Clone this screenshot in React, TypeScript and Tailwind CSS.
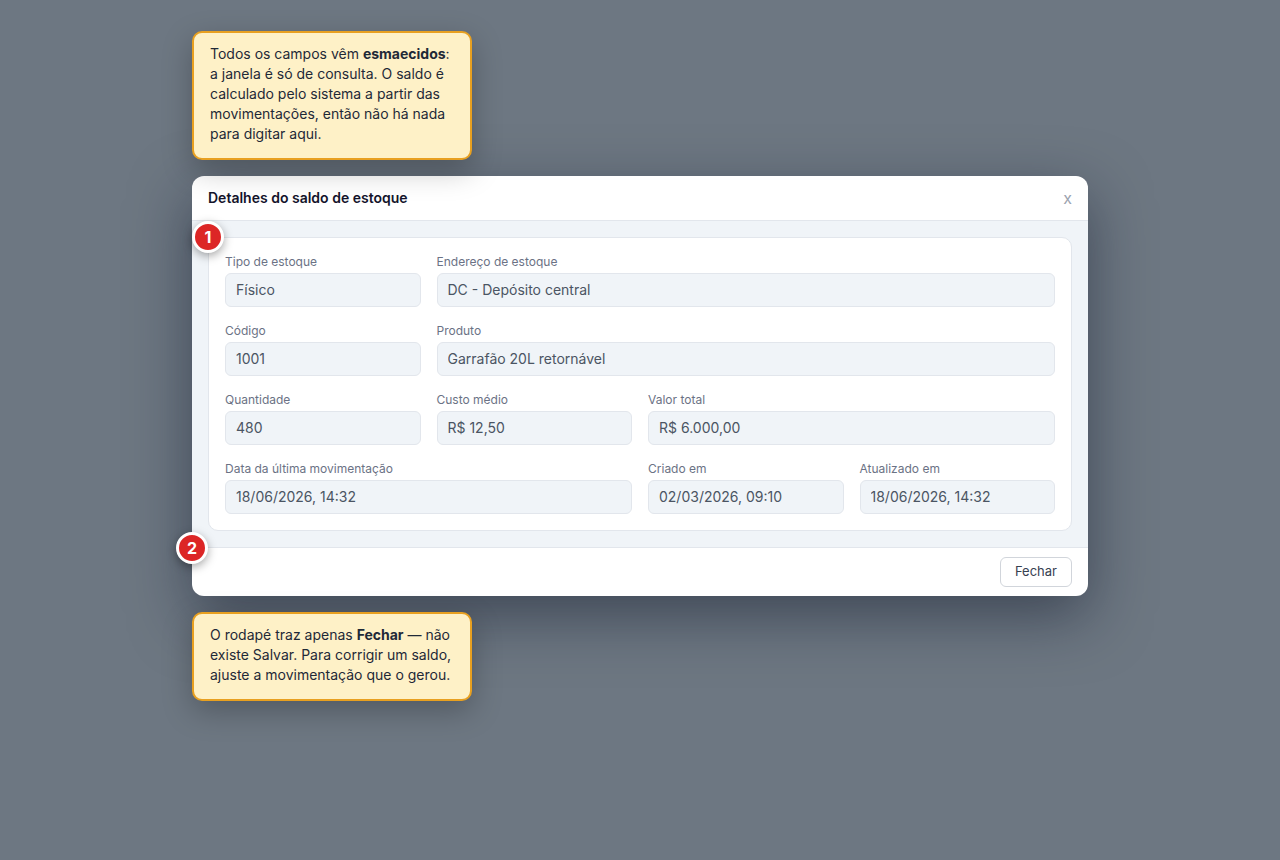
import type { ReactNode } from "react";

interface Field {
  id: string;
  label: string;
  value: string;
  span: string;
}

const fields: Field[] = [
  { id: "tipo", label: "Tipo de estoque", value: "Físico", span: "col-span-1" },
  { id: "endereco", label: "Endereço de estoque", value: "DC - Depósito central", span: "col-span-3" },
  { id: "codigo", label: "Código", value: "1001", span: "col-span-1" },
  { id: "produto", label: "Produto", value: "Garrafão 20L retornável", span: "col-span-3" },
  { id: "quantidade", label: "Quantidade", value: "480", span: "col-span-1" },
  { id: "custo", label: "Custo médio", value: "R$ 12,50", span: "col-span-1" },
  { id: "total", label: "Valor total", value: "R$ 6.000,00", span: "col-span-2" },
  { id: "ultima", label: "Data da última movimentação", value: "18/06/2026, 14:32", span: "col-span-2" },
  { id: "criado", label: "Criado em", value: "02/03/2026, 09:10", span: "col-span-1" },
  { id: "atualizado", label: "Atualizado em", value: "18/06/2026, 14:32", span: "col-span-1" },
];

function Note({ children }: { children: ReactNode }) {
  return (
    <aside className="relative z-10 w-[280px] rounded-[10px] border-2 border-[#e8a020] bg-[#fef1c7] px-4 pt-[11px] pb-3.5 text-sm leading-5 text-[#1f2937] shadow-[0_10px_30px_rgba(0,0,0,0.25)]">
      {children}
    </aside>
  );
}

function Badge({ n }: { n: number }) {
  return (
    <span className="absolute -top-4 -left-4 z-20 flex size-8 items-center justify-center rounded-full border-3 border-white bg-[#dc2626] text-base font-bold text-white shadow-[0_3px_10px_rgba(0,0,0,0.35)]">
      {n}
    </span>
  );
}

function ReadOnlyField({ id, label, value, span }: Field) {
  return (
    <div className={`flex min-w-0 flex-col gap-1 ${span}`}>
      <label htmlFor={id} className="text-xs leading-[15px] text-[#6b7285]">
        {label}
      </label>
      <input
        id={id}
        type="text"
        readOnly
        value={value}
        className="h-[34px] w-full rounded-md border border-[#e2e6ec] bg-[#f0f4f8] px-2.5 pb-0.5 text-sm text-[#4b5563]"
      />
    </div>
  );
}

export default function App() {
  return (
    <div className="min-h-screen bg-[#6d7782] px-4 pt-[31px] pb-8 font-['Inter',sans-serif]">
      <div className="mx-auto flex max-w-4xl flex-col gap-4">
        <Note>
          Todos os campos vêm <strong className="font-bold">esmaecidos</strong>: a janela é só de
          consulta. O saldo é calculado pelo sistema a partir das movimentações, então não há nada
          para digitar aqui.
        </Note>

        <section
          role="dialog"
          aria-labelledby="titulo"
          className="rounded-xl bg-white shadow-[0_20px_60px_rgba(15,23,42,0.5)]"
        >
          <header className="flex h-[45px] items-center justify-between border-b border-[#e2e6ec] px-4">
            <h2 id="titulo" className="text-sm font-semibold text-[#14142b]">
              Detalhes do saldo de estoque
            </h2>
            <button type="button" className="text-base text-[#9ca3af]">
              x
            </button>
          </header>

          <div className="bg-[#f0f4f8] p-4">
            <div className="relative">
              <Badge n={1} />
              <div className="grid grid-cols-4 gap-4 rounded-[10px] border border-[#e2e6ec] bg-white p-4">
                {fields.map((field) => (
                  <ReadOnlyField key={field.id} {...field} />
                ))}
              </div>
            </div>
          </div>

          <footer className="relative flex justify-end border-t border-[#e2e6ec] px-4 py-[9px]">
            <Badge n={2} />
            <button
              type="button"
              className="h-[30px] rounded-md border border-[#d1d5db] bg-white px-3.5 text-[13px] text-[#374151]"
            >
              Fechar
            </button>
          </footer>
        </section>

        <Note>
          O rodapé traz apenas <strong className="font-bold">Fechar</strong> — não existe Salvar.
          Para corrigir um saldo, ajuste a movimentação que o gerou.
        </Note>
      </div>
    </div>
  );
}
